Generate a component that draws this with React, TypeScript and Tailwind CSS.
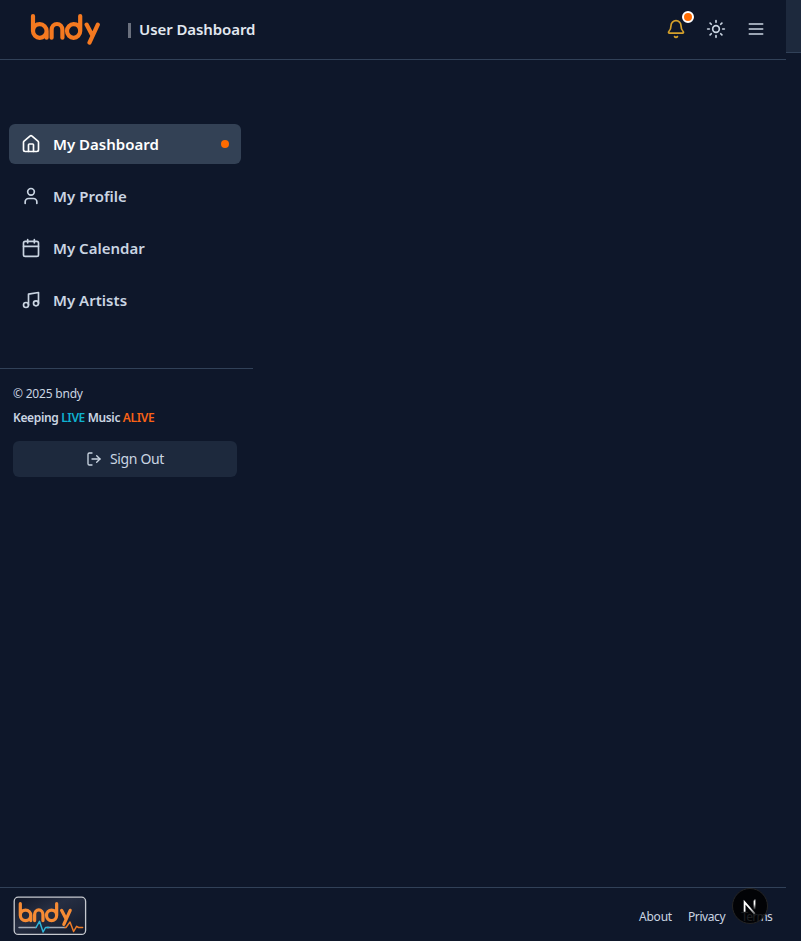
import { Bell, Calendar, House, LogOut, Music, Sun, User, type LucideIcon } from "lucide-react";

type NavEntry = { label: string; icon: LucideIcon; active?: boolean; tracking: string };

const navEntries: NavEntry[] = [
  { label: "My Dashboard", icon: House, active: true, tracking: "tracking-[0.01px]" },
  { label: "My Profile", icon: User, tracking: "tracking-[0.03px]" },
  { label: "My Calendar", icon: Calendar, tracking: "tracking-[0px]" },
  { label: "My Artists", icon: Music, tracking: "tracking-[0.02px]" },
];

function Wordmark() {
  return (
    <g fill="none" stroke="currentColor" strokeWidth="4.2" strokeLinecap="round" strokeLinejoin="round">
      <path d="M3 3V18a6.8 6.8 0 1 0 6.8-6.8c-3.8 0-6.8 2.4-6.8 6.8M16.6 18v6.7" />
      <path d="M21.6 24.7V17a5.2 5.8 0 0 1 10.8 0v7.7" />
      <path d="M50.2 3V18a6.6 6.8 0 1 1-6.6-6.8c3.8 0 6.6 2.6 6.6 6.8" />
      <path d="M56.6 11.6 62 21.8M67.8 11.6 59.5 29.6" />
    </g>
  );
}

function MenuIcon() {
  return (
    <svg width="20" height="20" viewBox="0 0 24 24" fill="none" stroke="currentColor" strokeWidth="2" strokeLinecap="round" className="text-slate-300">
      <path d="M4 6h16M4 12h16M4 18h16" />
    </svg>
  );
}

function Header() {
  return (
    <header className="flex h-[60px] w-[786px] items-center border-b border-slate-700 pb-[2px] pl-[30px] pr-5">
      <svg className="h-8 w-[72px] text-[#f47920]" viewBox="0 0 72 32" aria-label="bndy">
        <Wordmark />
      </svg>
      <div className="ml-[26px] mt-[3px] h-[15px] w-[3px] bg-[#6a707d]" />
      <h1 className="ml-[8px] whitespace-nowrap text-[15px] font-semibold leading-6 tracking-[-0.08px] text-slate-200">
        User Dashboard
      </h1>
      <div className="ml-auto flex items-center gap-5">
        <div className="relative">
          <Bell size={20} strokeWidth={2} className="text-[#d5a12b]" />
          <span className="absolute -right-[8px] -top-[8px] size-3 rounded-full border-2 border-white bg-[#ff6b00]" />
        </div>
        <Sun size={20} className="text-slate-300" />
        <MenuIcon />
      </div>
    </header>
  );
}

function Sidebar() {
  return (
    <aside className="w-[253px]">
      <nav className="flex h-[308px] flex-col gap-3 pl-[9px] pr-3 pt-16">
        {navEntries.map(({ label, icon: Icon, active, tracking }) => (
          <a
            key={label}
            className={`flex h-10 shrink-0 items-center rounded-md px-3 ${active ? "bg-[#334155] text-white" : "text-slate-300"}`}
          >
            <Icon size={20} strokeWidth={2} />
            <span className={`ml-3 whitespace-nowrap text-[15px] font-semibold ${tracking}`}>{label}</span>
            {active && <span className="ml-auto size-2 rounded-full bg-[#ff6b00]" />}
          </a>
        ))}
      </nav>
      <div className="border-t border-slate-700 pl-[13px] pr-4 pt-4">
        <p className="text-[12px] leading-[18px] tracking-[-0.2px] text-slate-300">© 2025 bndy</p>
        <p className="mt-[6px] whitespace-nowrap text-[12px] font-semibold leading-[18px] tracking-[-0.36px] text-slate-300">
          Keeping <span className="text-[#0eb2d0]">LIVE</span> Music <span className="text-[#f96216]">ALIVE</span>
        </p>
        <button className="mt-[14px] flex h-9 w-full items-center justify-center gap-2 rounded-md bg-slate-800 pb-px text-[14px] tracking-[-0.35px] text-slate-300">
          <LogOut size={16} className="mt-px" />
          Sign Out
        </button>
      </div>
    </aside>
  );
}

function FooterLogo() {
  return (
    <svg width="74" height="40" viewBox="0 0 74 40" aria-label="bndy">
      <defs>
        <linearGradient id="plate" x1="0" y1="0" x2="1" y2="1">
          <stop offset="0" stopColor="#101626" />
          <stop offset=".4" stopColor="#262e42" />
          <stop offset="1" stopColor="#11182a" />
        </linearGradient>
      </defs>
      <rect x="1.2" y="1.2" width="71.4" height="37.2" rx="4" fill="url(#plate)" stroke="#c6c9cf" strokeWidth="1.3" />
      <g transform="translate(5 5.3) scale(.77 .78)" className="text-[#f68b34]">
        <Wordmark />
      </g>
      <g fill="none" strokeWidth="1.5" strokeLinejoin="round" strokeLinecap="round">
        <path d="M6 31.5h17M34 31.5h18" stroke="#a3abb7" />
        <path d="M23 31.5 26.5 25.3l3.6 10.7 2.4-4.5H36" stroke="#30b4d6" />
        <path d="M52 31.5h1l4-5.5 3.6 9.5 3-5.2 2 1.2h4" stroke="#ed7b27" />
      </g>
    </svg>
  );
}

function DevBadge() {
  return (
    <div className="absolute left-[732px] top-[888px] size-9 rounded-full border border-[#242424] bg-black/85">
      <svg width="34" height="34" viewBox="0 0 34 34" fill="none" strokeWidth="1.8">
        <defs>
          <linearGradient id="nStem" x1="0" y1="11" x2="0" y2="21" gradientUnits="userSpaceOnUse">
            <stop offset=".4" stopColor="white" />
            <stop offset="1" stopColor="white" stopOpacity="0" />
          </linearGradient>
          <linearGradient id="nDiagonal" x1="18" y1="18" x2="23" y2="25" gradientUnits="userSpaceOnUse">
            <stop stopColor="white" />
            <stop offset="1" stopColor="white" stopOpacity=".3" />
          </linearGradient>
        </defs>
        <path d="M11.6 22.8V13.2l10.2 11.6" stroke="url(#nDiagonal)" />
        <path d="M21.5 11.5h.01V20.5" stroke="url(#nStem)" />
      </svg>
    </div>
  );
}

export default function App() {
  return (
    <div className="relative flex h-[941px] w-[801px] overflow-hidden bg-[#0e172a] font-['Noto_Sans','Open_Sans',sans-serif]">
      <div className="flex h-full w-[786px] shrink-0 flex-col">
        <Header />
        <main className="flex-1">
          <Sidebar />
        </main>
        <footer className="flex h-[54px] items-center border-t border-slate-700 pl-[13px] pr-[14px]">
          <div className="mt-[2px]">
            <FooterLogo />
          </div>
          <div className="ml-auto mt-[5px] flex gap-4 text-[12px] text-slate-300">
            <a className="tracking-[-0.2px]">About</a>
            <a className="tracking-[-0.4px]">Privacy</a>
            <a className="tracking-[-0.75px]">Terms</a>
          </div>
        </footer>
      </div>
      <div className="h-[53px] flex-1 border-b border-slate-700 bg-slate-800" />
      <DevBadge />
    </div>
  );
}
